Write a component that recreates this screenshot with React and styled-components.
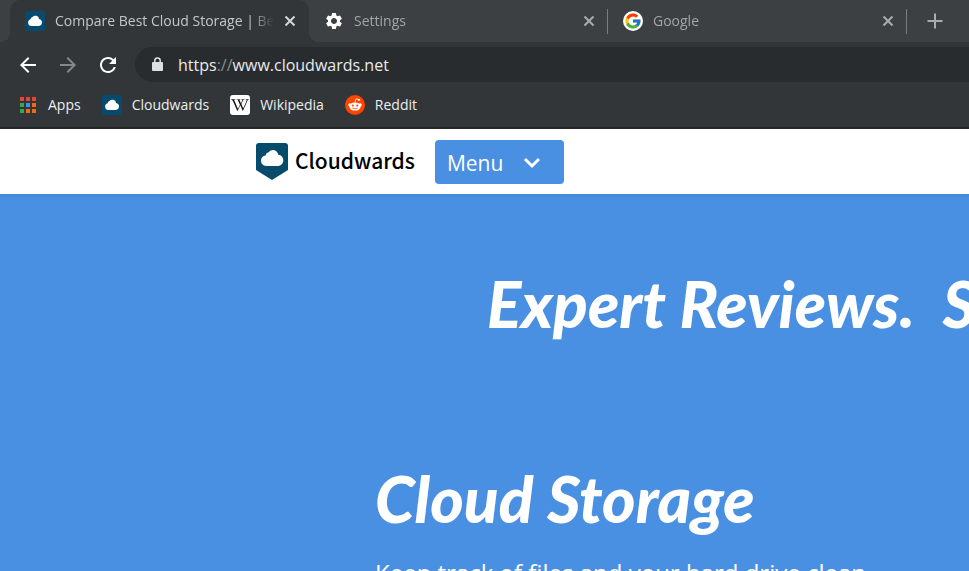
import React from 'react'
import styled, { createGlobalStyle } from 'styled-components'
import { MdSettings, MdArrowBack, MdArrowForward, MdRefresh } from 'react-icons/md'
import { FcGoogle } from 'react-icons/fc'
import { FaWikipediaW } from 'react-icons/fa'

const CloudIcon = () => (
  <svg width="20" height="20" viewBox="0 0 20 20" aria-hidden="true">
    <rect width="20" height="20" rx="2" fill="#064a6d" />
    <path fill="#fff" d="M6.300 15a3.500 3.500 0 0 1-.8-6.800A3 3 0 0 1 7.500 6a3.800 3.800 0 0 1 6.600 1.900 3.600 3.600 0 0 1-.3 7.100z" />
  </svg>
)

const ShieldLogo = () => (
  <svg width="32" height="37" viewBox="0 0 32 37" aria-hidden="true">
    <path fill="#064b6b" d="M3 0h26a3 3 0 0 1 3 3v24L16 37 0 27V3a3 3 0 0 1 3-3z" />
    <path
      fill="#fff"
      d="M10 23a5.200 5.200 0 0 1-5-5.500c0-2.700 1.700-4.600 4.600-5 .4-1.800 1.400-2.900 3-3.300A5.200 5.200 0 0 1 16.500 7c3 0 5.200 2 5.800 4.700 2.900.3 5 2.600 5 5.500 0 3.200-2.300 5.800-5.800 5.800z"
    />
  </svg>
)

const RedditIcon = () => (
  <svg width="20" height="20" viewBox="0 0 20 20" aria-hidden="true">
    <circle cx="10" cy="10" r="10" fill="#ff4500" />
    <path d="M10 7.500l.9-3.600 2.800.6" fill="none" stroke="#fff" strokeWidth=".8" />
    <circle cx="13.9" cy="4.800" r="1.100" fill="#fff" />
    <circle cx="4.800" cy="9.700" r="1.500" fill="#fff" />
    <circle cx="15.200" cy="9.700" r="1.500" fill="#fff" />
    <ellipse cx="10" cy="11.500" rx="5.700" ry="4.100" fill="#fff" />
    <circle cx="7.800" cy="10.500" r="1.100" fill="#ff4500" />
    <circle cx="12.200" cy="10.500" r="1.100" fill="#ff4500" />
    <path d="M7.700 13.200q2.300 1.500 4.600 0" fill="none" stroke="#ff4500" strokeWidth=".8" strokeLinecap="round" />
  </svg>
)

const appColors = ['#ea4335', '#ea4335', '#ea4335', '#34a853', '#2f9ae8', '#f4690b', '#34a853', '#f4690b', '#f4690b']

const AppsIcon = () => (
  <svg width="20" height="20" viewBox="0 0 20 20" aria-hidden="true">
    {appColors.map((color, i) => (
      <rect key={i} x={2 + (i % 3) * 6} y={2 + Math.floor(i / 3) * 6} width="4" height="4" fill={color} />
    ))}
  </svg>
)

const LockIcon = () => (
  <svg width="11" height="15" viewBox="0 0 11 15" aria-hidden="true">
    <path fill="none" stroke="#dedfe1" strokeWidth="1.500" d="M2.800 6V3.600a2.700 2.700 0 0 1 5.400 0V6" />
    <rect y="5" width="11" height="9" rx="1" fill="#dedfe1" />
  </svg>
)

const CloseIcon = () => (
  <svg width="12" height="12" viewBox="0 0 12 12" aria-hidden="true">
    <path d="M1.500 1.500l9 9m0-9l-9 9" stroke="currentColor" strokeWidth="2" />
  </svg>
)

const PlusIcon = () => (
  <svg width="16" height="16" viewBox="0 0 16 16" aria-hidden="true">
    <path d="M8 .5v15M.5 8h15" stroke="currentColor" strokeWidth="2" />
  </svg>
)

const ChevronIcon = () => (
  <svg width="18" height="12" viewBox="0 0 18 12" aria-hidden="true">
    <path d="M2 2l7 7 7-7" fill="none" stroke="#fff" strokeWidth="3" />
  </svg>
)

const tabs = [
  { title: 'Compare Best Cloud Storage | Be', icon: <CloudIcon />, active: true },
  { title: 'Settings', icon: <MdSettings size={20} color="#fff" /> },
  { title: 'Google', icon: <GoogleIcon /> },
]

const bookmarks = [
  { title: 'Apps', icon: <AppsIcon /> },
  { title: 'Cloudwards', icon: <CloudIcon /> },
  { title: 'Wikipedia', icon: <WikipediaIcon /> },
  { title: 'Reddit', icon: <RedditIcon /> },
]

function GoogleIcon() {
  return (
    <Badge $round>
      <FcGoogle size={18} />
    </Badge>
  )
}

function WikipediaIcon() {
  return (
    <Badge>
      <FaWikipediaW size={18} color="#111" />
    </Badge>
  )
}

function App() {
  return (
    <Page>
      <GlobalStyle />
      <TabStrip>
        {tabs.map((tab) => (
          <Tab key={tab.title} $active={tab.active}>
            {tab.icon}
            <TabTitle $active={tab.active}>{tab.title}</TabTitle>
            <IconButton $color={tab.active ? '#d4d6d8' : '#a9acaf'} aria-label={`Close ${tab.title}`}>
              <CloseIcon />
            </IconButton>
          </Tab>
        ))}
        <NewTab $color="#a9acaf" aria-label="New tab">
          <PlusIcon />
        </NewTab>
      </TabStrip>

      <Toolbar>
        <NavButtons>
          <IconButton $color="#fff" aria-label="Back">
            <MdArrowBack size={24} />
          </IconButton>
          <IconButton $color="#85888a" aria-label="Forward">
            <MdArrowForward size={24} />
          </IconButton>
          <IconButton $color="#fff" aria-label="Reload">
            <MdRefresh size={24} />
          </IconButton>
        </NavButtons>
        <AddressBar>
          <LockIcon />
          <Url href="https://www.cloudwards.net">
            https<Muted>://</Muted>www.cloudwards.net
          </Url>
        </AddressBar>
      </Toolbar>

      <Bookmarks>
        {bookmarks.map((item) => (
          <Bookmark key={item.title} href="#">
            {item.icon}
            {item.title}
          </Bookmark>
        ))}
      </Bookmarks>

      <SiteHeader>
        <Brand href="#">
          <ShieldLogo />
          Cloudwards
        </Brand>
        <MenuButton>
          Menu
          <ChevronIcon />
        </MenuButton>
      </SiteHeader>

      <Hero>
        <Headline>
          <span>Expert Reviews.</span>
          <span>S</span>
        </Headline>
        <Section>
          <SectionTitle>Cloud Storage</SectionTitle>
          <Copy>Keep track of files and your hard drive clean</Copy>
        </Section>
      </Hero>
    </Page>
  )
}

export default App

const GlobalStyle = createGlobalStyle`
  * {
    box-sizing: border-box;
  }

  body {
    margin: 0;
    font-family: 'Open Sans', 'Noto Sans', sans-serif;
  }

  svg {
    flex: none;
    display: block;
  }
`

const Page = styled.div`
  display: flex;
  flex-direction: column;
  height: 100vh;
  overflow: hidden;
`

const TabStrip = styled.div`
  display: flex;
  flex: none;
  height: 42px;
  padding-left: 10px;
  background: #3c4043;
`

const Tab = styled.div`
  position: relative;
  display: flex;
  align-items: center;
  gap: 10px;
  flex: 0 1 299px;
  min-width: 0;
  padding: 0 13px 0 15px;
  background: ${(props) => (props.$active ? '#323639' : 'transparent')};
  border-radius: 10px 10px 0 0;

  /* curved feet of the active tab, divider for the others */
  &::before,
  &::after {
    content: '';
    position: absolute;
    display: ${(props) => (props.$active ? 'block' : 'none')};
    bottom: 0;
    width: 10px;
    height: 10px;
  }

  &::before {
    right: 100%;
    background: radial-gradient(circle at 0 0, transparent 10px, #323639 10px);
  }

  &::after {
    left: 100%;
    background: radial-gradient(circle at 100% 0, transparent 10px, #323639 10px);
    ${(props) =>
      !props.$active &&
      `
      display: block;
      left: auto;
      right: 0;
      bottom: 8px;
      width: 1px;
      height: 25px;
      background: #7b7e81;
    `}
  }
`

const TabTitle = styled.span`
  flex: 1;
  overflow: hidden;
  white-space: nowrap;
  font-size: 14px;
  line-height: 20px;
  color: ${(props) => (props.$active ? '#c3c6c9' : '#a2a5a8')};
  mask-image: linear-gradient(to left, transparent, #000 24px);
`

const IconButton = styled.button`
  display: flex;
  flex: none;
  padding: 0;
  border: 0;
  background: none;
  color: ${(props) => props.$color};
`

const NewTab = styled(IconButton)`
  align-items: center;
  padding: 0 20px;
`

const Toolbar = styled.div`
  display: flex;
  flex: none;
  padding-top: 5px;
  background: #323639;
`

const NavButtons = styled.div`
  display: flex;
  align-items: center;
  gap: 16px;
  padding: 0 15px 0 16px;
`

const AddressBar = styled.div`
  display: flex;
  flex: 1;
  align-items: center;
  gap: 15px;
  height: 35px;
  padding-left: 17px;
  border-radius: 18px 0 0 18px;
  background: #282c2f;
`

const Url = styled.a`
  font-size: 16px;
  line-height: 24px;
  color: #e8eaed;
  text-decoration: none;
`

const Muted = styled.span`
  color: #898c8f;
`

const Bookmarks = styled.nav`
  display: flex;
  flex: none;
  align-items: center;
  gap: 21px;
  height: 47px;
  padding: 0 18px;
  background: #323639;
  border-bottom: 2px solid #242628;
`

const Bookmark = styled.a`
  display: flex;
  align-items: center;
  gap: 10px;
  font-size: 14px;
  line-height: 20px;
  color: #eceef0;
  text-decoration: none;
`

const Badge = styled.span`
  display: flex;
  flex: none;
  align-items: center;
  justify-content: center;
  width: 20px;
  height: 20px;
  border-radius: ${(props) => (props.$round ? '50%' : '3px')};
  background: #fff;
`

const SiteHeader = styled.header`
  display: flex;
  flex: none;
  align-items: center;
  gap: 20px;
  height: 65px;
  padding-left: 256px;
  background: #fff;
`

const Brand = styled.a`
  display: flex;
  gap: 7px;
  font-family: 'Noto Sans CJK SC', 'Noto Sans', sans-serif;
  font-size: 21px;
  font-weight: 500;
  line-height: 34px;
  color: #000;
  text-decoration: none;
`

const MenuButton = styled.button`
  display: flex;
  align-items: center;
  gap: 20px;
  height: 44px;
  padding: 2px 23px 0 12px;
  border: 0;
  border-radius: 4px;
  background: #4a90e2;
  font-family: inherit;
  font-size: 21px;
  color: #fff;
`

const Hero = styled.main`
  flex: 1;
  min-height: 0;
  overflow: hidden;
  padding-top: 70px;
  background: linear-gradient(#4686d3, #4a90e2 4px);
  color: #fff;
`

const Headline = styled.h1`
  display: flex;
  gap: 28px;
  margin: 0;
  padding-left: 487px;
  font-family: Lato, sans-serif;
  font-size: 64px;
  font-style: italic;
  font-weight: 900;
  line-height: 80px;
  white-space: nowrap;
`

const Section = styled.section`
  padding: 115px 0 0 375px;
`

const SectionTitle = styled.h2`
  margin: 0;
  font-family: Lato, sans-serif;
  font-size: 64px;
  font-style: italic;
  font-weight: 900;
  line-height: 80px;
`

const Copy = styled.p`
  margin: 16px 0 0;
  font-size: 24px;
  line-height: 36px;
  white-space: nowrap;
`
